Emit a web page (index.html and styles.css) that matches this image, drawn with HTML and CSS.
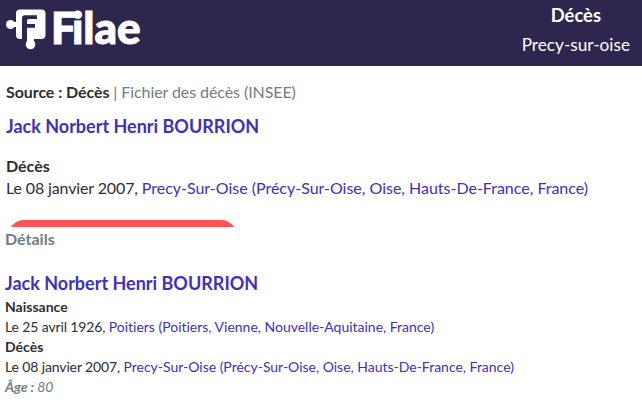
FILE: index.html
```html
<!DOCTYPE html>
<html lang="fr">
<head>
  <meta charset="UTF-8">
  <meta name="viewport" content="width=device-width, initial-scale=1.0">
  <title>Filae</title>
  <link rel="stylesheet" href="styles.css">
</head>
<body>
  <header class="topbar">
    <div class="logo">
      <svg class="logo-mark" width="42" height="43" viewBox="6 7 42 43">
        <g fill="#fff">
          <rect x="16" y="9.500" width="29.500" height="29.500" rx="4"/>
          <rect x="12" y="22" width="5" height="5"/>
          <circle cx="10.500" cy="24.500" r="4.500"/>
          <rect x="27" y="38" width="7" height="5"/>
          <circle cx="30.500" cy="44.500" r="4.800"/>
        </g>
        <path fill="#2e264e" d="M22 18q0-2.800 2.800-2.800H37V19h-8q-2 0-2 2v3h8v3.700h-8V39h-5z"/>
      </svg>
      <span class="logo-text"><span class="logo-initial">F</span>ilae</span>
    </div>
    <div class="place">
      <h1>Décès</h1>
      <p>Precy-sur-oise</p>
    </div>
  </header>

  <main>
    <section class="record">
      <p class="source"><b>Source : Décès</b> | Fichier des décès (INSEE)</p>
      <h2>Jack Norbert Henri BOURRION</h2>
      <h3>Décès</h3>
      <p class="event">Le 08 janvier 2007, <a>Precy-Sur-Oise (Précy-Sur-Oise, Oise, Hauts-De-France, France)</a></p>
      <div class="button-clip"><div class="button"></div></div>
    </section>

    <section class="details">
      <p class="details-title">Détails</p>
      <h2>Jack Norbert Henri BOURRION</h2>
      <h3>Naissance</h3>
      <p class="event">Le 25 avril 1926, <a>Poitiers (Poitiers, Vienne, Nouvelle-Aquitaine, France)</a></p>
      <h3>Décès</h3>
      <p class="event">Le 08 janvier 2007, <a>Precy-Sur-Oise (Précy-Sur-Oise, Oise, Hauts-De-France, France)</a></p>
      <p class="age"><b>Âge :</b> 80</p>
    </section>
  </main>
</body>
</html>
```
FILE: styles.css
```css
* {
  box-sizing: border-box;
  margin: 0;
  padding: 0;
}

body {
  background: #fff;
  color: #2d2d33;
  font-family: Lato, "Liberation Sans", sans-serif;
  font-size: 16px;
  font-variant-ligatures: none;
  overflow: hidden;
}

h1, h2, h3 {
  font-weight: bold;
}

a {
  color: #4031b5;
  letter-spacing: -0.01px;
}

/* Header */
.topbar {
  display: flex;
  justify-content: space-between;
  height: 66px;
  padding: 0 12px 0 6px;
  background: #2e264e;
  color: #fff;
}

.logo {
  display: flex;
  align-items: flex-start;
  padding-top: 7px;
}

.logo-text {
  margin: -4px 0 0 3px;
  font-size: 44px;
  font-weight: 900;
  line-height: 48px;
  letter-spacing: 0;
  -webkit-text-stroke: 1px #fff;
}

/* The arm of the F runs into the dot of the i */
.logo-initial {
  letter-spacing: -4px;
}

.place {
  text-align: center;
}

.place h1 {
  font-size: 18.4px;
  line-height: 30px;
}

.place p {
  font-size: 17.2px;
  line-height: 30px;
}

/* Record summary */
.record {
  padding: 15px 6px 0;
}

.source {
  color: #707c86;
  line-height: 22px;
  letter-spacing: -0.08px;
}

.source b {
  color: #2d2d33;
}

h2 {
  color: #4031b5;
  font-size: 18px;
  line-height: 24px;
}

.record h2 {
  margin-top: 11px;
}

.record h3 {
  margin-top: 17px;
  font-size: 16px;
  line-height: 22px;
}

.event {
  letter-spacing: -0.13px;
}

.record .event {
  line-height: 22px;
}

/* Only the top of the button is visible */
.button-clip {
  width: 229px;
  height: 7px;
  margin: 21px 0 0 2px;
  overflow: hidden;
}

.button {
  height: 40px;
  border-radius: 16px;
  background: #ff5358;
}

/* Details */
.details {
  padding: 1px 5px 0;
  font-size: 14px;
  line-height: 20px;
}

.details-title {
  color: #707c86;
  font-size: 16px;
  font-weight: bold;
  line-height: 22px;
}

.details h2 {
  margin: 21px 0 2px;
}

.details h3 {
  font-size: 14px;
}

.age {
  color: #707c86;
  font-style: italic;
  letter-spacing: -0.1px;
}
```
